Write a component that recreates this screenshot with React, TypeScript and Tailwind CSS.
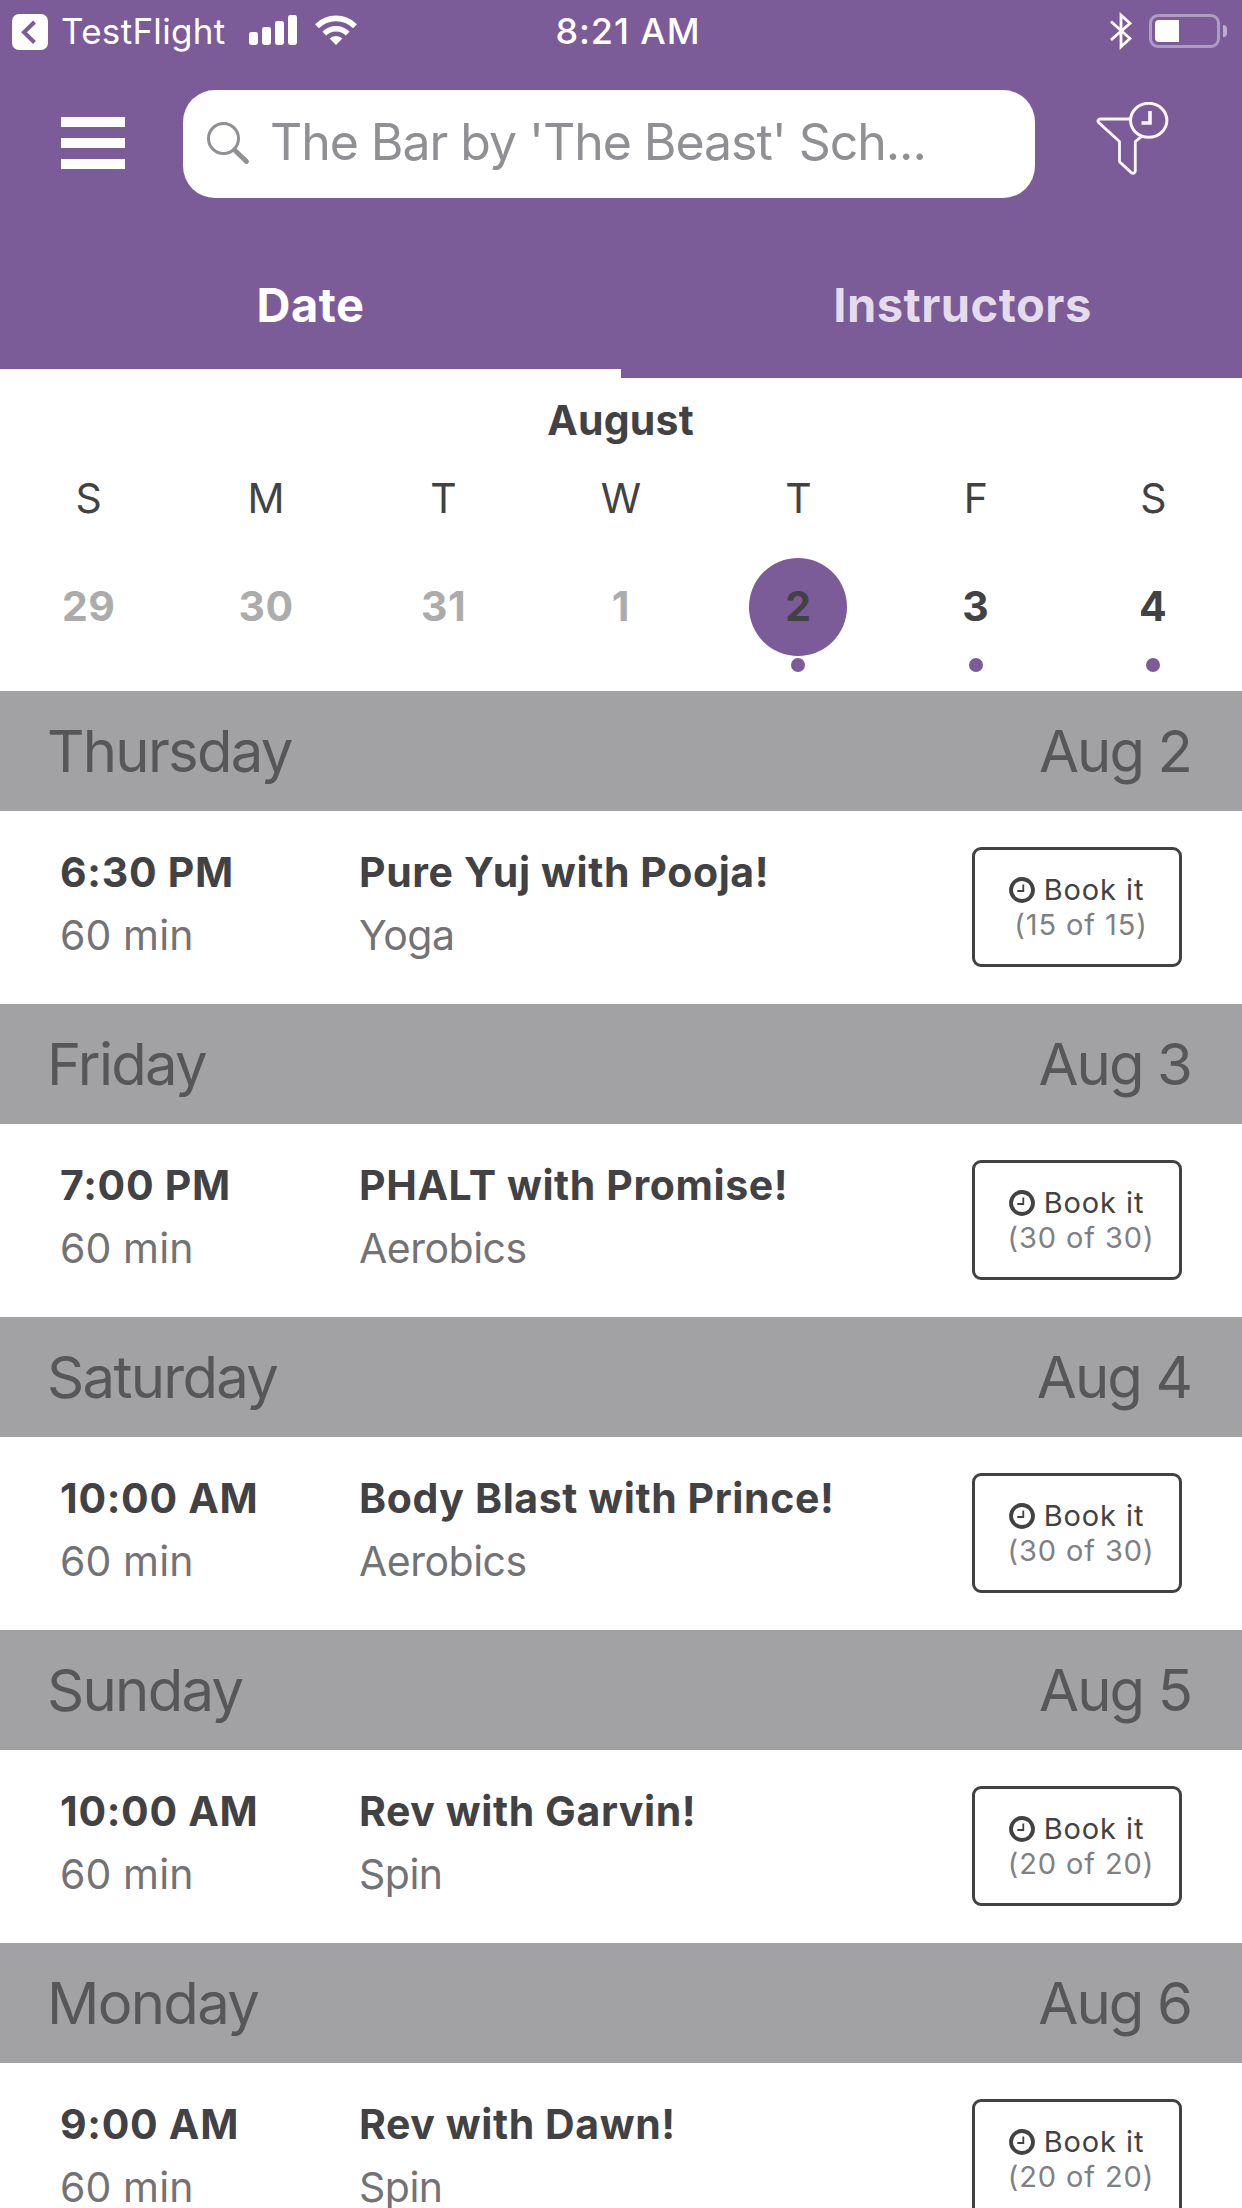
type ClassItem = {
  day: string;
  date: string;
  time: string;
  title: string;
  category: string;
  spots: string;
};

type CalendarDay = {
  weekday: string;
  date: number;
  past?: boolean;
  selected?: boolean;
  hasClasses?: boolean;
};

const week: CalendarDay[] = [
  { weekday: "S", date: 29, past: true },
  { weekday: "M", date: 30, past: true },
  { weekday: "T", date: 31, past: true },
  { weekday: "W", date: 1, past: true },
  { weekday: "T", date: 2, selected: true, hasClasses: true },
  { weekday: "F", date: 3, hasClasses: true },
  { weekday: "S", date: 4, hasClasses: true },
];

const classes: ClassItem[] = [
  { day: "Thursday", date: "Aug 2", time: "6:30 PM", title: "Pure Yuj with Pooja!", category: "Yoga", spots: "(15 of 15)" },
  { day: "Friday", date: "Aug 3", time: "7:00 PM", title: "PHALT with Promise!", category: "Aerobics", spots: "(30 of 30)" },
  { day: "Saturday", date: "Aug 4", time: "10:00 AM", title: "Body Blast with Prince!", category: "Aerobics", spots: "(30 of 30)" },
  { day: "Sunday", date: "Aug 5", time: "10:00 AM", title: "Rev with Garvin!", category: "Spin", spots: "(20 of 20)" },
  { day: "Monday", date: "Aug 6", time: "9:00 AM", title: "Rev with Dawn!", category: "Spin", spots: "(20 of 20)" },
];

/* ---------------------------------- Icons ---------------------------------- */
function SignalIcon() {
  return (
    <svg width="48" height="30" viewBox="0 0 48 30" fill="currentColor">
      <rect x="0" y="17" width="9" height="13" rx="2.4" />
      <rect x="13" y="12" width="9" height="18" rx="2.4" />
      <rect x="26" y="6" width="9" height="24" rx="2.4" />
      <rect x="39" y="0" width="9" height="30" rx="2.4" />
    </svg>
  );
}

function WifiIcon() {
  return (
    <svg width="42" height="30" viewBox="0 0 42 30" fill="none" stroke="currentColor">
      <path d="M2 11.2a27 27 0 0 1 38 0" strokeWidth="5.6" />
      <path d="M9.3 18.6a16.5 16.5 0 0 1 23.4 0" strokeWidth="5.4" />
      <path d="M21 30l-6.4-6.4a9.1 9.1 0 0 1 12.8 0z" fill="currentColor" stroke="none" />
    </svg>
  );
}

function BluetoothIcon() {
  return (
    <svg width="22" height="38" viewBox="0 0 22 38" fill="none" stroke="currentColor" strokeWidth="2.8">
      <path d="M1 9.5L20 26.5L11 34.8V3.2L20 11.3L1 28" />
    </svg>
  );
}

function FilterIcon() {
  return (
    <svg width="74" height="74" viewBox="0 0 74 74" fill="none" stroke="#fdf8ff" strokeWidth="2.8" strokeLinecap="round" strokeLinejoin="round">
      <path d="M34 17H4.5C2.2 17 1.2 19 2.7 20.6L23.5 39.5V59.8L35 70.4C37 72 39.3 71.2 39.3 69V39.5L46 34.2" />
      <ellipse cx="52.7" cy="18.3" rx="18.2" ry="17" strokeWidth="3" />
      <path d="M54 9V21H45.5" strokeWidth="3.6" strokeLinecap="butt" strokeLinejoin="miter" />
    </svg>
  );
}

function ClockIcon() {
  return (
    <svg width="26" height="26" viewBox="0 0 26 26" fill="none" stroke="currentColor">
      <circle cx="13" cy="13" r="11" strokeWidth="3.8" />
      <path d="M14.3 7.5V14H8.3" strokeWidth="1.8" />
    </svg>
  );
}

/* -------------------------------- Status bar ------------------------------- */
function StatusBar() {
  return (
    <div className="grid h-[63px] grid-cols-3 items-center">
      <div className="flex items-center pl-3">
        <svg width="36" height="36" viewBox="0 0 36 36">
          <rect width="36" height="36" rx="7" fill="#fff" />
          <path d="M22.5 8L12 18.3L22.5 28.5" fill="none" stroke="#7b5b98" strokeWidth="4" />
        </svg>
        <span className="ml-[13px] w-[188px] text-[35px] leading-[63px] tracking-[0.3px]">TestFlight</span>
        <div className="-mt-[3px] flex gap-[18px]">
          <SignalIcon />
          <WifiIcon />
        </div>
      </div>
      <div className="pl-[14px] text-center text-[36px] leading-[63px] font-medium tracking-[0.9px]">8:21 AM</div>
      <div className="flex items-center justify-end gap-[17px] pr-[15px] pb-[2px]">
        <BluetoothIcon />
        <div className="flex items-center gap-[3px]">
          <div className="h-[34px] w-[71px] rounded-[9px] border-3 border-white/40 p-[3px]">
            <div className="h-[22px] w-6 rounded-l-[4px] bg-white" />
          </div>
          <div className="h-3 w-1 rounded-r-full bg-white/50" />
        </div>
      </div>
    </div>
  );
}

/* ---------------------------------- Header --------------------------------- */
function Header() {
  return (
    <header className="bg-[#7b5b98] text-white">
      <StatusBar />
      <div className="flex pt-[27px]">
        <button className="mt-[27px] ml-[61px] flex h-[52px] w-16 flex-col justify-between" aria-label="Menu">
          <span className="h-[10px] w-full bg-white" />
          <span className="h-[10px] w-full bg-white" />
          <span className="h-[10px] w-full bg-white" />
        </button>
        <div className="ml-[58px] flex h-[108px] w-[852px] rounded-[32px] bg-white pl-6 text-[#8f8f94]">
          <svg className="mt-[32px]" width="43" height="43" viewBox="0 0 43 43" fill="none" stroke="currentColor">
            <circle cx="16.5" cy="16.5" r="15" strokeWidth="3" />
            <path d="M27.5 28L39.5 39.5" strokeWidth="4.8" strokeLinecap="round" />
          </svg>
          <span className="ml-5 h-[104px] text-[50px] leading-[104px] tracking-[-1.05px]">The Bar by 'The Beast' Sch...</span>
        </div>
        <button className="mt-[12px] ml-[61px] h-[74px]" aria-label="Filter by time">
          <FilterIcon />
        </button>
      </div>
      <nav className="grid h-[180px] grid-cols-2 text-center text-[47px] leading-[60px] font-bold tracking-[0.5px]">
        <div className="border-b-9 border-white pt-[77px]">Date</div>
        <div className="pt-[77px] pl-[62px] text-[#e4dcea]">Instructors</div>
      </nav>
    </header>
  );
}

/* --------------------------------- Calendar -------------------------------- */
function WeekCalendar() {
  return (
    <section className="h-[313px] text-center text-[41px]">
      <h2 className="pr-px leading-[84px] font-bold tracking-[0.2px]">August</h2>
      <div className="grid grid-cols-7">
        {week.map((d) => (
          <div key={d.date} className="flex flex-col items-center">
            <span className="leading-[72px]">{d.weekday}</span>
            <span
              className={`mt-6 size-[98px] rounded-full text-[41px] leading-[97px] font-bold tracking-[0.6px] ${
                d.selected ? "bg-[#7b5b98]" : ""
              } ${d.past ? "text-[#acacac]" : ""}`}
            >
              {d.date}
            </span>
            {d.hasClasses && <span className="mt-[2px] size-[14px] rounded-full bg-[#7b5b98]" />}
          </div>
        ))}
      </div>
    </section>
  );
}

/* -------------------------------- Class list ------------------------------- */
function ClassRow({ item }: { item: ClassItem }) {
  return (
    <section>
      <div className="flex h-[120px] justify-between bg-[#a2a2a4] pr-[51px] pl-[47px] text-[58px] leading-[120px] tracking-[-1.7px] text-[#575759]">
        <span>{item.day}</span>
        <span className="tracking-[-1.9px]">{item.date}</span>
      </div>
      <div className="flex h-[193px] pl-[60px] text-[41px] leading-[63px]">
        <div className="w-[299px] pt-[30px]">
          <p className="font-bold tracking-[0.7px]">{item.time}</p>
          <p className="tracking-[0.1px] text-[#737375]">60 min</p>
        </div>
        <div className="w-[613px] pt-[30px]">
          <p className="font-bold tracking-[0.6px]">{item.title}</p>
          <p className="tracking-[-0.5px] text-[#737375]">{item.category}</p>
        </div>
        <button className="mt-9 flex h-[120px] w-[210px] flex-col items-center justify-center rounded-[9px] border-3 border-[#424244] text-[29px] leading-[35px] tracking-[0.9px]">
          <span className="flex items-center gap-[9px] pr-px">
            <ClockIcon />
            Book it
          </span>
          <span className="pl-[8px] text-[#808082]">{item.spots}</span>
        </button>
      </div>
    </section>
  );
}

export default function App() {
  return (
    <div className="h-[2208px] w-[1242px] overflow-hidden bg-white font-['Inter','Liberation_Sans',sans-serif] whitespace-nowrap text-[#424244]">
      <Header />
      <WeekCalendar />
      {classes.map((item) => (
        <ClassRow key={item.day} item={item} />
      ))}
    </div>
  );
}
